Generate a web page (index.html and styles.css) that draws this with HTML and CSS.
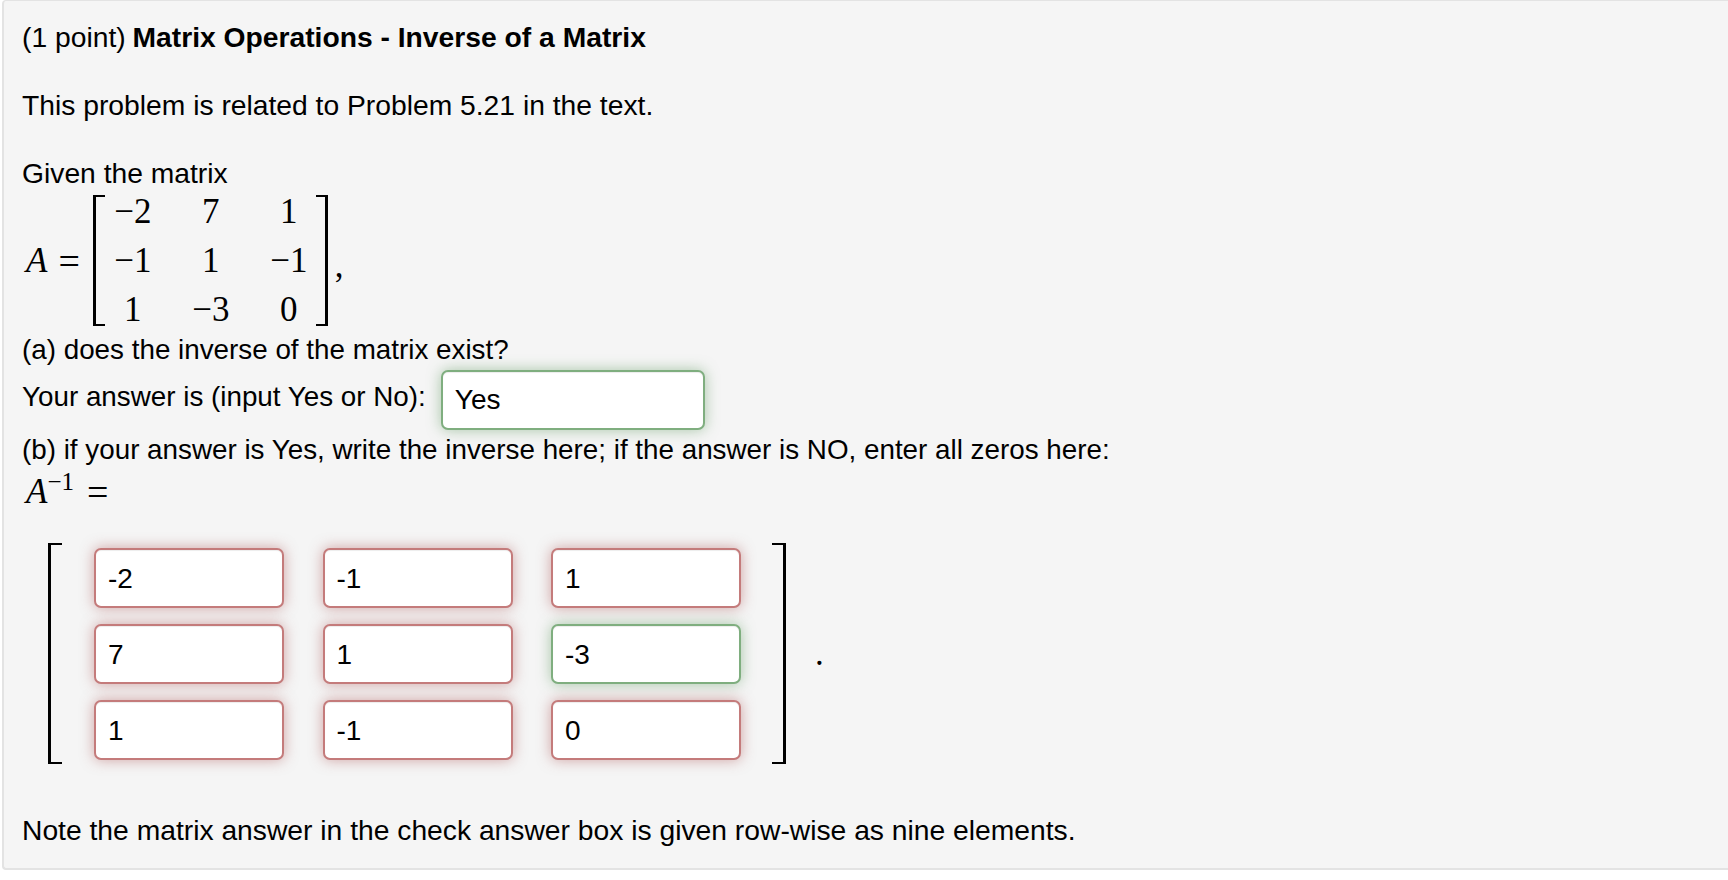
FILE: index.html
```html
<!DOCTYPE html>
<html>
<head>
  <meta charset="utf-8">
  <title>Matrix Operations - Inverse of a Matrix</title>
  <link rel="stylesheet" href="styles.css">
</head>
<body>
  <div class="problem">
    <p class="text gap">(1 point) <b>Matrix Operations - Inverse of a Matrix</b></p>
    <p class="text gap">This problem is related to Problem 5.21 in the text.</p>
    <p class="text">Given the matrix</p>

    <div class="math given">
      <span class="var">A</span>
      <span class="equals">=</span>
      <div class="bracket small">
        <span>−2</span><span>7</span><span>1</span>
        <span>−1</span><span>1</span><span>−1</span>
        <span>1</span><span>−3</span><span>0</span>
      </div>
      <span class="comma">,</span>
    </div>

    <p class="text tight part-a">(a) does the inverse of the matrix exist?</p>
    <div class="answer-row">
      <label class="text tight" for="existsAnswer">Your answer is (input Yes or No):</label>
      <input type="text" id="existsAnswer" class="answer correct yes" value="Yes" autocomplete="off">
    </div>

    <p class="text tight">(b) if your answer is Yes, write the inverse here; if the answer is NO, enter all zeros here:</p>
    <div class="math inverse">
      <span class="var">A<sup>−1</sup></span>
      <span class="equals">=</span>
    </div>

    <div class="answer-matrix">
      <div class="bracket large">
        <input type="text" class="answer wrong" value="-2" autocomplete="off">
        <input type="text" class="answer wrong" value="-1" autocomplete="off">
        <input type="text" class="answer wrong" value="1" autocomplete="off">
        <input type="text" class="answer wrong" value="7" autocomplete="off">
        <input type="text" class="answer wrong" value="1" autocomplete="off">
        <input type="text" class="answer correct" value="-3" autocomplete="off">
        <input type="text" class="answer wrong" value="1" autocomplete="off">
        <input type="text" class="answer wrong" value="-1" autocomplete="off">
        <input type="text" class="answer wrong" value="0" autocomplete="off">
      </div>
      <span class="period">.</span>
    </div>

    <p class="text note">Note the matrix answer in the check answer box is given row-wise as nine elements.</p>
  </div>
</body>
</html>
```

FILE: styles.css
```css
body {
  margin: 0;
  background: #fff;
  color: #000;
  font-family: "Liberation Sans", Arial, sans-serif;
}

.problem {
  box-sizing: border-box;
  height: 870px;
  margin-left: 2px;
  padding: 19px 18px 0;
  background: #f5f5f5;
  border: solid #e3e3e3;
  border-width: 1px 0 2px 2px;
  border-radius: 4px 0 0 4px;
}

.text {
  margin: 0;
  font-size: 28.25px;
  line-height: 34px;
}

.text.tight {
  font-size: 27.8px;
}

.text b {
  margin-left: -1px;
}

.gap {
  margin-bottom: 34px;
}

.math {
  display: flex;
  align-items: center;
  font-family: "Liberation Serif", "Times New Roman", serif;
  font-size: 35px;
}

.var {
  font-style: italic;
}

.var sup {
  font-size: 25px;
  font-style: normal;
  line-height: 0;
  vertical-align: 13px;
}

.given {
  margin: 5px 0 0 4px;
}

.equals {
  margin-left: 11px;
  font-size: 38px;
}

.comma {
  margin: 10px 0 0 7px;
}

.bracket {
  position: relative;
  display: grid;
}

.bracket::before,
.bracket::after {
  content: "";
  position: absolute;
  top: 0;
  bottom: 0;
  border: solid #000;
  border-width: 2px 0;
}

.bracket::before {
  left: 0;
  border-left-width: 3px;
}

.bracket::after {
  right: 0;
  border-right-width: 3px;
}

.bracket.small {
  grid-template-columns: repeat(3, 78px);
  grid-auto-rows: 49px;
  align-content: center;
  justify-items: center;
  align-items: center;
  box-sizing: border-box;
  width: 235px;
  height: 131px;
  margin-left: 13px;
  padding: 0 1px;
}

.bracket.small::before,
.bracket.small::after {
  width: 9px;
}

.part-a {
  margin-top: 7px;
}

.answer-row {
  display: flex;
  align-items: center;
  gap: 15px;
  margin-top: 3px;
}

.answer-row .text {
  margin-top: -6px;
}

.answer {
  box-sizing: border-box;
  width: 190px;
  height: 60px;
  padding: 2px 12px 0 12px;
  background: #fff;
  border: 2px solid;
  border-radius: 7px;
  outline: none;
  color: #000;
  font-family: "Liberation Sans", Arial, sans-serif;
  font-size: 28px;
}

.answer.yes {
  width: 264px;
  padding-top: 0;
}

.answer.correct {
  border-color: #7fae7f;
  box-shadow: inset 0 1px 1px rgba(0, 0, 0, 0.075), 0 0 14px rgba(90, 150, 90, 0.5);
}

.answer.wrong {
  border-color: #c47b7b;
  box-shadow: inset 0 1px 1px rgba(0, 0, 0, 0.075), 0 0 14px rgba(170, 80, 80, 0.5);
}

.answer-row + .text {
  margin-top: 3px;
}

.inverse {
  height: 40px;
  margin: 5px 0 0 4px;
}

.inverse .equals {
  margin-left: 13px;
}

.answer-matrix {
  display: flex;
  align-items: center;
  margin: 31px 0 0 26px;
}

.bracket.large {
  grid-template-columns: repeat(3, 190px);
  column-gap: 38.5px;
  row-gap: 16px;
  box-sizing: border-box;
  width: 738px;
  height: 221px;
  padding: 5px 46px;
}

.bracket.large::before,
.bracket.large::after {
  width: 11px;
}

.period {
  margin: 0 0 0 29px;
  font-family: "Liberation Serif", "Times New Roman", serif;
  font-size: 35px;
}

.note {
  margin-top: 49px;
}
```
